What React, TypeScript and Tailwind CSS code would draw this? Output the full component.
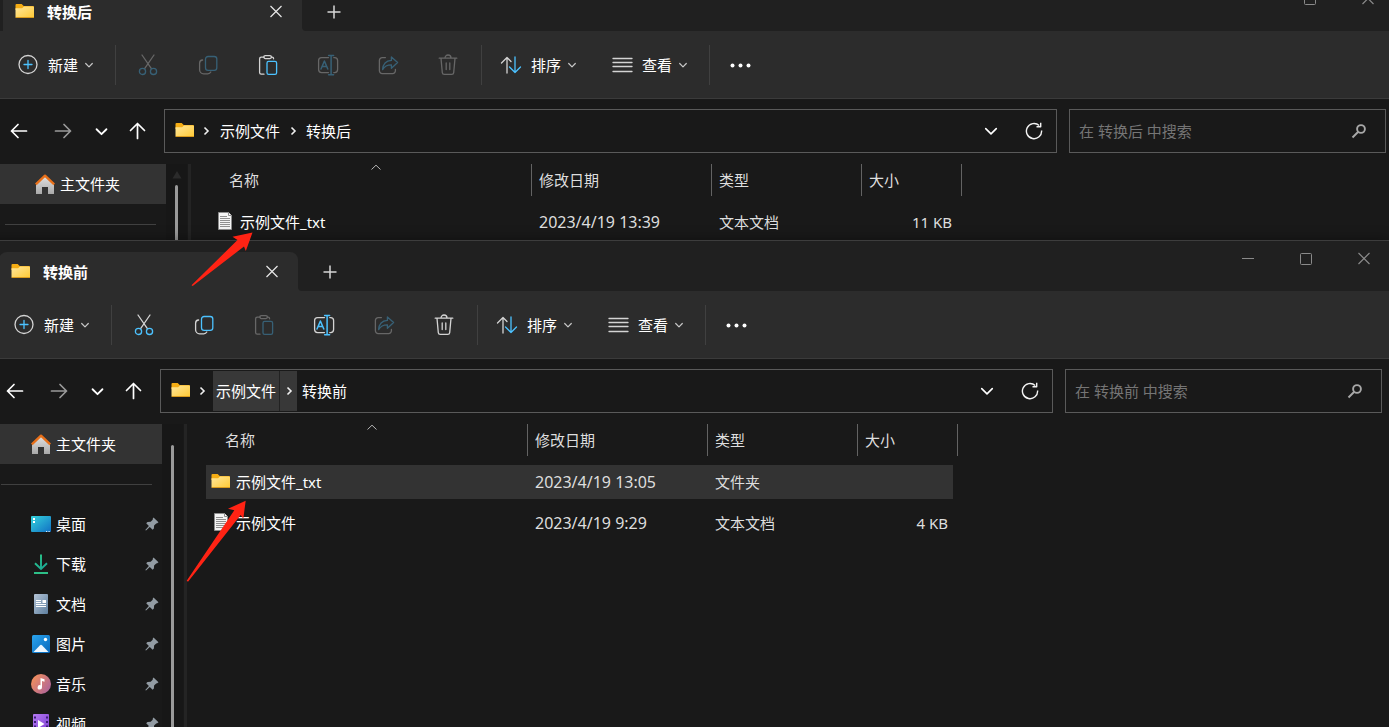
import type { ReactNode } from "react";
import clsx from "clsx";

interface FileRow {
  name: string;
  date: string;
  type: string;
  size?: string;
  folder?: boolean;
  selected?: boolean;
}

interface Place {
  name: string;
  icon: ReactNode;
}

interface WindowProps {
  title: string;
  files: FileRow[];
  enabled: string[];
  pinned?: Place[];
  parentHover?: boolean;
  scrollArrow?: boolean;
  className: string;
}

const BLUE = "#4cc2ff";

function FolderIcon() {
  return (
    <svg width="20" height="20" viewBox="0 0 20 20" className="shrink-0">
      <defs>
        <linearGradient id="folder" x1="0" y1="0" x2="1" y2="1">
          <stop offset="0" stopColor="#ffe79c" />
          <stop offset="1" stopColor="#ffc933" />
        </linearGradient>
      </defs>
      <path d="M0.5 3a1 1 0 0 1 1-1h5.2l2 2H18a1 1 0 0 1 1 1v3H0.5z" fill="#f5ad14" />
      <path d="M0.500 6.200h6.600l2-1.600H18a1 1 0 0 1 1 1V15a1 1 0 0 1-1 1H1.500a1 1 0 0 1-1-1z" fill="url(#folder)" />
      <path d="M0.8 15.500h18" stroke="#d99a1c" strokeWidth="1" />
    </svg>
  );
}

function TextFileIcon() {
  return (
    <svg width="20" height="20" viewBox="0 0 20 20" className="shrink-0">
      <path d="M3.500 .5h10l3 3v14h-13z" fill="#f4f4f4" stroke="#8d8d8d" />
      <path d="M13.500 .5v3h3" fill="#fff" stroke="#8d8d8d" />
      <path d="M5 4.500h7M5 6.500h10M5 8.500h10M5 10.500h10M5 12.500h10M5 14.500h10" stroke="#8f8f8f" />
    </svg>
  );
}

function ChevronDown({ size = 10, width = 1.2 }: { size?: number; width?: number }) {
  return (
    <svg width={size} height={size} viewBox="0 0 10 10" fill="none" stroke="currentColor" strokeWidth={width} strokeLinecap="round" strokeLinejoin="round">
      <path d="M1.700 3.500 5 6.800l3.300-3.300" />
    </svg>
  );
}

function ChevronRight() {
  return (
    <svg width="10" height="10" viewBox="0 0 10 10" fill="none" stroke="#f0f0f0" strokeWidth="1.6">
      <path d="M3.5 1.5 7 5 3.5 8.5" />
    </svg>
  );
}

function CloseIcon() {
  return (
    <svg width="14" height="14" viewBox="0 0 14 14" stroke="currentColor" strokeWidth="1.2">
      <path d="M1.5 1l11 11M12.5 1l-11 11" />
    </svg>
  );
}

function ToolIcon({ children }: { children: ReactNode }) {
  return (
    <svg width="22" height="22" viewBox="0 0 22 22" fill="none" stroke="#d4d4d4" strokeWidth="1.3" strokeLinecap="round" strokeLinejoin="round">
      {children}
    </svg>
  );
}

const tools = [
  {
    id: "cut",
    label: "剪切",
    icon: (
      <ToolIcon>
        <path d="M5 1l9.4 13.6M17 1L7.6 14.6" />
        <circle cx="5.5" cy="17.4" r="3.1" stroke={BLUE} />
        <circle cx="16.5" cy="17.4" r="3.1" stroke={BLUE} />
      </ToolIcon>
    ),
  },
  {
    id: "copy",
    label: "复制",
    icon: (
      <ToolIcon>
        <path d="M5.600 6a3.200 3.200 0 0 0-3 3.200v6.600a4 4 0 0 0 4 4h4.200a3.400 3.400 0 0 0 3-1.800" />
        <rect x="8.5" y="2.5" width="11.300" height="13.8" rx="2.6" stroke={BLUE} />
      </ToolIcon>
    ),
  },
  {
    id: "paste",
    label: "粘贴",
    icon: (
      <ToolIcon>
        <path d="M7 3.2H4.2a1.6 1.6 0 0 0-1.6 1.6v13.800a1.600 1.600 0 0 0 1.600 1.600H7M14.400 3.200h.6a1.600 1.600 0 0 1 1.600 1.600" />
        <rect x="6.8" y="1.6" width="7.6" height="3" rx="1.5" />
        <rect x="10" y="7.4" width="9.6" height="13" rx="1.6" stroke={BLUE} />
      </ToolIcon>
    ),
  },
  {
    id: "rename",
    label: "重命名",
    icon: (
      <ToolIcon>
        <path d="M11.5 3.6H4.6a3 3 0 0 0-3 3v9a3 3 0 0 0 3 3h6.9M16.800 3.600h.8a3 3 0 0 1 3 3v9a3 3 0 0 1-3 3h-.8" />
        <path d="M11.6 1.400h5M11.600 20.800h5M14.100 1.400v19.400" stroke={BLUE} strokeWidth="1.500" />
        <path d="M4 15 7.400 7l3.400 8M5.200 12.600h4.400" stroke={BLUE} strokeWidth="1.500" />
      </ToolIcon>
    ),
  },
  {
    id: "share",
    label: "共享",
    icon: (
      <ToolIcon>
        <path d="M8.4 3.6H5.2a2.800 2.800 0 0 0-2.800 2.800v10.400a2.800 2.800 0 0 0 2.800 2.800h10.400a2.800 2.800 0 0 0 2.800-2.800v-1.400" />
        <path d="M14.4 3l6.200 5.600-6.200 5.600v-3.400c-4.400 0-7 1.500-8.800 4.800.4-5.600 3.400-8.800 8.800-9.200z" stroke={BLUE} />
      </ToolIcon>
    ),
  },
  {
    id: "delete",
    label: "删除",
    icon: (
      <ToolIcon>
        <path d="M2.200 4.200h17.600M8 4a3 3 0 0 1 6 0M4 4.400l1.300 14.200a2 2 0 0 0 2 1.800h7.400a2 2 0 0 0 2-1.800L18 4.400M9.200 9v6.500M12.800 9v6.500" />
      </ToolIcon>
    ),
  },
];

const places: Place[] = [
  {
    name: "桌面",
    icon: (
      <svg width="20" height="20" viewBox="0 0 20 20">
        <defs>
          <linearGradient id="desk" x1="0" y1="0" x2="1" y2="1">
            <stop offset="0" stopColor="#35d3dc" />
            <stop offset="1" stopColor="#1170c4" />
          </linearGradient>
        </defs>
        <rect y="2" width="20" height="16" rx="1" fill="url(#desk)" />
        <path d="M2 4h2v2H2zM2 7h2v2H2z" fill="#fff" />
        <path d="M15 17.500h1.200M17.500 17.500h1.200" stroke="#d8ecff" />
      </svg>
    ),
  },
  {
    name: "下载",
    icon: (
      <svg width="20" height="20" viewBox="0 0 20 20" fill="none" strokeWidth="1.900">
        <defs>
          <linearGradient id="down" gradientUnits="userSpaceOnUse" x1="4" y1="0" x2="16" y2="16">
            <stop offset="0" stopColor="#2fd08a" />
            <stop offset="1" stopColor="#17a398" />
          </linearGradient>
        </defs>
        <path d="M10 .5v14M4 9.200l6 5.800 6-5.800" stroke="url(#down)" />
        <path d="M3 19h14" stroke="#2fc98e" />
      </svg>
    ),
  },
  {
    name: "文档",
    icon: (
      <svg width="20" height="20" viewBox="0 0 20 20">
        <defs>
          <linearGradient id="doc" x1="0" y1="0" x2="1" y2="1">
            <stop offset="0" stopColor="#b4c4d6" />
            <stop offset="1" stopColor="#5e7f9f" />
          </linearGradient>
        </defs>
        <rect x="3" width="14" height="20" rx="1" fill="url(#doc)" />
        <path d="M5 6.500h5M5 8.500h5M5 10.500h10M5 12.500h10" stroke="#fff" />
        <rect x="11.500" y="6" width="3.500" height="3" fill="#fff" />
      </svg>
    ),
  },
  {
    name: "图片",
    icon: (
      <svg width="20" height="20" viewBox="0 0 20 20">
        <defs>
          <linearGradient id="pic" x1="0" y1="0" x2="1" y2="1">
            <stop offset="0" stopColor="#2aa4ee" />
            <stop offset="1" stopColor="#0767bb" />
          </linearGradient>
        </defs>
        <rect x="1" y="1" width="18" height="18" rx="1.500" fill="url(#pic)" />
        <circle cx="14.500" cy="5.500" r="1.700" fill="#fff" />
        <path d="M2.500 18l6.300-6.600a1.700 1.700 0 0 1 2.400 0L17.500 18z" fill="#eef7ff" />
      </svg>
    ),
  },
  {
    name: "音乐",
    icon: (
      <svg width="20" height="20" viewBox="0 0 20 20">
        <defs>
          <linearGradient id="music" x1="0" y1=".2" x2="1" y2=".9">
            <stop offset="0" stopColor="#f5915a" />
            <stop offset="1" stopColor="#a8609f" />
          </linearGradient>
        </defs>
        <circle cx="10" cy="10" r="10" fill="url(#music)" />
        <path d="M9.500 4l4 1.200v2.600l-2.500-.8v6.300a2.200 2.200 0 1 1-1.500-2z" fill="#fff" />
      </svg>
    ),
  },
  {
    name: "视频",
    icon: (
      <svg width="20" height="20" viewBox="0 0 20 20">
        <defs>
          <linearGradient id="video" x1="0" y1="0" x2="1" y2="1">
            <stop offset="0" stopColor="#b67af3" />
            <stop offset="1" stopColor="#7a3bd0" />
          </linearGradient>
        </defs>
        <rect x="2" width="16" height="20" rx="1" fill="url(#video)" />
        <path d="M4 2.500v16M16 2.500v16" stroke="#3b1c78" strokeWidth="2" strokeDasharray="2 2.500" />
        <path d="M7 6l6.500 4L7 14z" fill="#fff" />
      </svg>
    ),
  },
];

function HomeIcon() {
  return (
    <svg width="20" height="20" viewBox="0 0 20 20">
      <defs>
        <linearGradient id="home" x1="0" y1="0" x2="0" y2="1">
          <stop offset="0" stopColor="#e3e3e3" />
          <stop offset="1" stopColor="#a9a9a9" />
        </linearGradient>
      </defs>
      <path d="M1 9.500L10 1.500l9 8V20h-6v-7H7v7H1z" fill="url(#home)" />
      <path d="M.8 10.300L10 1.700l9.200 8.600" fill="none" stroke="#e8701a" strokeWidth="2.400" strokeLinejoin="round" />
    </svg>
  );
}

function PinIcon() {
  return (
    <svg width="14" height="14" viewBox="0 0 14 14" fill="#929ba3">
      <path d="M8.500.5l5 4.800-1.300 1-1 .1-2.100 2.100-.2 3-1.300 1.200-2.800-2.800L1 13.600l-.7-.6 3.600-4.100-2.700-2.700 1.300-1.300 3.200-.2 2-2 .1-1.200z" />
    </svg>
  );
}

function MenuButton({ icon, label }: { icon: ReactNode; label: string }) {
  return (
    <button type="button" className="flex h-10 shrink-0 items-center pl-4 pr-[18px]">
      {icon}
      <span className="ml-[9px] mr-[6px]">{label}</span>
      <span className="text-[#c8c8c8]">
        <ChevronDown />
      </span>
    </button>
  );
}

function Separator() {
  return <span className="ml-[3px] mr-[2px] h-10 w-px shrink-0 bg-[#404040]" />;
}

function TitleBar({ title }: { title: string }) {
  return (
    <header className="flex h-[50px] shrink-0 items-end bg-[#202020] pl-[11px]">
      <div className="relative flex h-[39px] w-[299px] shrink-0 items-center rounded-t-lg bg-[#2c2c2c] pl-3 pr-[14px]">
        <FolderIcon />
        <span className="ml-3 flex-1 font-semibold text-white">{title}</span>
        <button type="button" aria-label="关闭标签页" className="grid size-6 place-items-center text-[#e8e8e8]">
          <CloseIcon />
        </button>
        <span className="absolute -right-1 bottom-0 size-1 bg-[#2c2c2c]">
          <span className="block size-1 rounded-bl bg-[#202020]" />
        </span>
      </div>
      <button type="button" aria-label="新建标签页" className="ml-4 grid h-[39px] w-8 place-items-center">
        <svg width="14" height="14" viewBox="0 0 14 14" stroke="#d6d6d6" strokeWidth="1.500">
          <path d="M7 .5v13M.5 7h13" />
        </svg>
      </button>
      <div className="ml-auto flex gap-[10px] self-start pr-px text-[#8a8a8a]">
        <button type="button" aria-label="最小化" className="grid h-9 w-12 place-items-center">
          <svg width="12" height="12" viewBox="0 0 12 12" stroke="currentColor">
            <path d="M0 5.500h12" />
          </svg>
        </button>
        <button type="button" aria-label="最大化" className="grid h-9 w-12 place-items-center">
          <svg width="12" height="12" viewBox="0 0 12 12" fill="none" stroke="currentColor">
            <rect x=".5" y=".5" width="11" height="11" rx="1" />
          </svg>
        </button>
        <button type="button" aria-label="关闭" className="grid h-9 w-12 place-items-center">
          <CloseIcon />
        </button>
      </div>
    </header>
  );
}

function Toolbar({ enabled }: { enabled: string[] }) {
  return (
    <div className="flex h-[68px] shrink-0 items-center border-b border-[#3b3b3b] bg-[#2c2c2c] pl-[9px] text-white">
      <MenuButton
        label="新建"
        icon={
          <ToolIcon>
            <circle cx="11" cy="10.500" r="9" />
            <path d="M11 6.500v8M7 10.500h8" stroke={BLUE} />
          </ToolIcon>
        }
      />
      <Separator />
      {tools.map(tool => (
        <button
          key={tool.id}
          type="button"
          aria-label={tool.label}
          disabled={!enabled.includes(tool.id)}
          className="grid h-10 w-[60px] shrink-0 place-items-center disabled:opacity-35"
        >
          {tool.icon}
        </button>
      ))}
      <Separator />
      <MenuButton
        label="排序"
        icon={
          <ToolIcon>
            <path d="M7 19V3.500M1.500 9L7 3.500 11 7.500" />
            <path d="M15 3v15.500M9.500 13l5.500 5.500 5.500-5.500" stroke={BLUE} />
          </ToolIcon>
        }
      />
      <MenuButton
        label="查看"
        icon={
          <ToolIcon>
            <path d="M2 4.500h19M2 8.500h19M2 12.500h19M2 17.500h19" />
          </ToolIcon>
        }
      />
      <Separator />
      <button type="button" aria-label="查看更多" className="grid h-10 w-14 place-items-center">
        <svg width="22" height="22" viewBox="0 0 22 22" fill="#fff">
          <circle cx="3.500" cy="11.500" r="2" />
          <circle cx="11.500" cy="11.500" r="2" />
          <circle cx="19.500" cy="11.500" r="2" />
        </svg>
      </button>
    </div>
  );
}

function Arrow({ d }: { d: string }) {
  return (
    <svg width="18" height="18" viewBox="0 0 18 18" fill="none" stroke="currentColor" strokeWidth="1.700" strokeLinecap="round" strokeLinejoin="round">
      <path d={d} />
    </svg>
  );
}

function AddressRow({ title, parentHover }: { title: string; parentHover?: boolean }) {
  return (
    <div className="flex shrink-0 items-center pb-[11px] pl-[5px] pr-[7px] pt-[10px] text-white">
      <button type="button" aria-label="后退" className="grid h-10 w-11 place-items-center">
        <Arrow d="M16.500 9h-15M8 2.500L1.500 9 8 15.500" />
      </button>
      <button type="button" aria-label="前进" className="grid h-10 w-11 place-items-center text-[#9a9a9a]">
        <Arrow d="M1.500 9h15M10 2.500L16.500 9 10 15.500" />
      </button>
      <button type="button" aria-label="最近浏览的位置" className="grid h-10 w-8 place-items-center">
        <ChevronDown size={15} />
      </button>
      <button type="button" aria-label="向上" className="grid h-10 w-10 place-items-center">
        <Arrow d="M9.500 16.500v-15M2.500 8.500l7-7 7 7" />
      </button>
      <div className="ml-[7px] flex h-11 min-w-0 flex-1 items-center border border-[#5a5a5a] py-px pl-[10px]">
        <FolderIcon />
        <span className="grid w-[22px] place-items-center">
          <ChevronRight />
        </span>
        <button type="button" className={clsx("h-full shrink-0 px-[3px]", parentHover && "bg-[#383838]")}>
          示例文件
        </button>
        <span
          className={clsx(
            "grid h-full w-[18px] place-items-center border-l",
            parentHover ? "border-[#222] bg-[#383838]" : "border-transparent",
          )}
        >
          <ChevronRight />
        </span>
        <button type="button" className="h-full shrink-0 px-[5px]">
          {title}
        </button>
        <button type="button" aria-label="历史记录" className="ml-auto grid h-full w-[42px] place-items-center">
          <ChevronDown size={16} width={1} />
        </button>
        <button type="button" aria-label="刷新" className="grid h-full w-11 place-items-center">
          <svg width="18" height="18" viewBox="0 0 18 18" fill="none" stroke="#f4f4f4" strokeWidth="1.400">
            <path d="M16.600 8.500A7.600 7.600 0 1 1 14.200 3.500" />
            <path d="M11.500 4.800h4.200V.8" strokeLinejoin="round" />
          </svg>
        </button>
      </div>
      <label className="ml-3 flex h-11 w-[317px] shrink-0 items-center border border-[#5a5a5a] pl-[9px] pr-[18px]">
        <input
          type="search"
          aria-label="搜索"
          placeholder={`在 ${title} 中搜索`}
          className="min-w-0 flex-1 bg-transparent outline-none placeholder:text-[#757575]"
        />
        <svg width="16" height="16" viewBox="0 0 16 16" fill="none" stroke="#a8a8a8" strokeWidth="1.900">
          <circle cx="10" cy="6" r="3.900" />
          <path d="M7 9l-5.500 5.500" />
        </svg>
      </label>
    </div>
  );
}

function Sidebar({ pinned, scrollArrow }: { pinned: Place[]; scrollArrow?: boolean }) {
  return (
    <aside className="flex shrink-0 items-stretch text-white">
      <nav className="w-[174px] overflow-hidden">
        <button type="button" className="flex h-10 w-full items-center gap-[5px] bg-[#333] pl-[43px]">
          <HomeIcon />
          主文件夹
        </button>
        <div className="flex h-10 items-center pl-[13px] pr-[10px]">
          <hr className="w-full border-[#404040]" />
        </div>
        {pinned.map(place => (
          <button key={place.name} type="button" className="flex h-10 w-full items-center gap-[5px] pl-[43px] pr-[3px]">
            {place.icon}
            <span className="flex-1 text-left">{place.name}</span>
            <PinIcon />
          </button>
        ))}
      </nav>
      <div className="flex w-[21px] flex-col items-center bg-[#171717]">
        <div className="flex h-[21px] items-center">
          {scrollArrow && (
            <svg width="10" height="8" viewBox="0 0 10 8" fill="#2b2b2b">
              <path d="M5 0l4.500 7.500h-9z" />
            </svg>
          )}
        </div>
        <div className="w-[3px] flex-1 rounded-t bg-[#9a9a9a]" />
      </div>
      <div className="ml-px w-[3px] bg-[#242424]" />
    </aside>
  );
}

function HeaderCell({ label, className, sorted }: { label: string; className: string; sorted?: boolean }) {
  return (
    <th className={clsx("h-[37px] p-0 align-top font-normal", className)}>
      <div className={clsx("relative flex h-8 items-center border-r border-[#636363]", sorted ? "pl-[19px]" : "pl-[7px]")}>
        {label}
        {sorted && (
          <svg width="10" height="6" viewBox="0 0 10 6" fill="none" stroke="#b5b5b5" className="absolute left-1/2 top-0">
            <path d="M.5 5.500L5 1.200l4.500 4.300" />
          </svg>
        )}
      </div>
    </th>
  );
}

function FileTable({ files }: { files: FileRow[] }) {
  return (
    <table className="w-[752px] table-fixed border-separate border-spacing-0 self-start text-left text-[#dedede]">
      <thead>
        <tr>
          <HeaderCell label="名称" className="w-[322px]" sorted />
          <HeaderCell label="修改日期" className="w-[180px]" />
          <HeaderCell label="类型" className="w-[150px]" />
          <HeaderCell label="大小" className="w-[100px]" />
        </tr>
      </thead>
      <tbody>
        {files.map(file => {
          const cell = clsx("flex h-[34px] items-center", file.selected && "bg-[#333]");
          return (
            <tr key={file.name}>
              <td className="h-[41px] p-0">
                <div className={clsx(cell, "gap-[5px] pl-[5px] text-white")}>
                  {file.folder ? <FolderIcon /> : <TextFileIcon />}
                  {file.name}
                </div>
              </td>
              <td className="p-0">
                <div className={clsx(cell, "pl-[7px] text-base")}>{file.date}</div>
              </td>
              <td className="p-0">
                <div className={clsx(cell, "pl-[7px]")}>{file.type}</div>
              </td>
              <td className="p-0 pr-[5px]">
                <div className={clsx(cell, "justify-end pr-[5px]")}>{file.size}</div>
              </td>
            </tr>
          );
        })}
      </tbody>
    </table>
  );
}

function ExplorerWindow({ title, files, enabled, pinned = [], parentHover, scrollArrow, className }: WindowProps) {
  return (
    <section className={clsx("absolute flex flex-col overflow-hidden border-t border-[#3d3d3d] bg-[#191919]", className)}>
      <TitleBar title={title} />
      <Toolbar enabled={enabled} />
      <AddressRow title={title} parentHover={parentHover} />
      <div className="flex min-h-0 flex-1 overflow-hidden">
        <Sidebar pinned={pinned} scrollArrow={scrollArrow} />
        <div className="flex flex-1 pl-[19px]">
          <FileTable files={files} />
        </div>
      </div>
    </section>
  );
}

export default function App() {
  return (
    <main className="relative h-screen overflow-hidden bg-[#191919] font-['Noto_Sans','Noto_Sans_CJK_SC',sans-serif] text-[15px] leading-5">
      <ExplorerWindow
        title="转换后"
        enabled={["paste"]}
        scrollArrow
        files={[{ name: "示例文件_txt", date: "2023/4/19 13:39", type: "文本文档", size: "11 KB" }]}
        className="-left-2 -right-1 -top-5 h-[280px]"
      />
      <ExplorerWindow
        title="转换前"
        enabled={["cut", "copy", "rename", "delete"]}
        pinned={places}
        parentHover
        files={[
          { name: "示例文件_txt", date: "2023/4/19 13:05", type: "文件夹", folder: true, selected: true },
          { name: "示例文件", date: "2023/4/19 9:29", type: "文本文档", size: "4 KB" },
        ]}
        className="-left-3 bottom-0 right-0 top-60 shadow-[0_0_12px_rgba(0,0,0,0.4)]"
      />

      {/* red pointers drawn over both windows */}
      <svg width="64" height="56" viewBox="0 0 64 56" fill="#ff2314" className="pointer-events-none absolute left-[190px] top-[231px]">
        <path d="M62.500 1.500L42.500 5.700l5 3.300L1.500 54.300l1.200.7L54 15.500l1.800 4.500z" />
      </svg>
      <svg width="64" height="84" viewBox="0 0 64 84" fill="#ff2314" className="pointer-events-none absolute left-[185px] top-[499px]">
        <path d="M60.700 1.700L43 9.700l6.300 1.500L1.700 81.700l1.300 1L55.700 16l2.600 3.700z" />
      </svg>
    </main>
  );
}
